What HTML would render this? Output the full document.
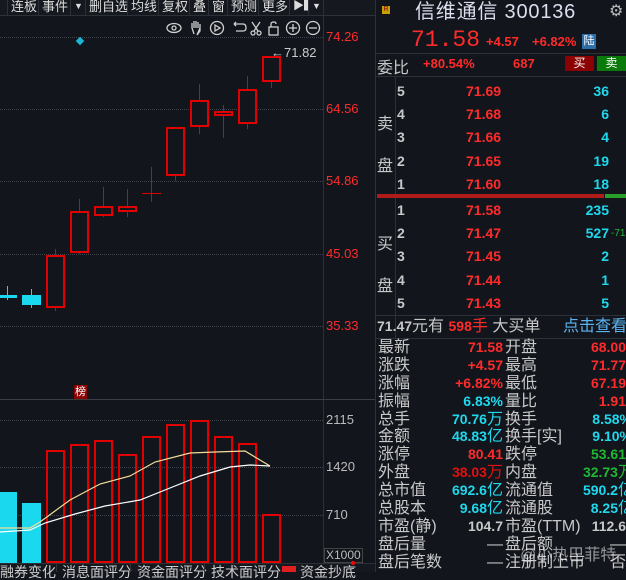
<!DOCTYPE html>
<html><head><meta charset="utf-8">
<style>
*{margin:0;padding:0;box-sizing:border-box}
body{width:626px;height:572px;background:#12161c;overflow:hidden;position:relative;font-family:"Liberation Sans","Noto Sans CJK SC",sans-serif;color:#c8c8c8}
.a{position:absolute;white-space:nowrap}
.r{color:#ff2b2b}.c{color:#1fd8ee}.g{color:#1fb832}.w{color:#c8c8c8}
.bx{position:absolute;border:2px solid #e00000}
.wk{position:absolute;width:1px;background:#e00000}
.cy{position:absolute;background:#1ad8ee}
.cw{position:absolute;width:1px;background:#1ad8ee}
.gl{position:absolute;left:0;width:323px;border-top:1px dotted #3e444c}
.tb{position:absolute;top:0;height:15px;font-size:13px;line-height:13px;color:#ddd;border-right:1px solid #2c3138;padding:0 0 0 3px;white-space:nowrap;overflow:hidden}
.st b{font-size:14px}
</style></head><body>
<!-- toolbar -->
<div class="a" style="left:0;top:0;width:376px;height:16px;background:#15191f;border-bottom:1px solid #2c3138"></div>
<div class="tb" style="left:0;width:8px"></div>
<div class="tb" style="left:8px;width:31px">连板</div>
<div class="tb" style="left:39px;width:32px">事件</div>
<div class="tb" style="left:71px;width:15px;font-size:9px">▼</div>
<div class="tb" style="left:86px;width:42px">删自选</div>
<div class="tb" style="left:128px;width:31px">均线</div>
<div class="tb" style="left:159px;width:31px">复权</div>
<div class="tb" style="left:190px;width:19px">叠</div>
<div class="tb" style="left:209px;width:19px">窗</div>
<div class="tb" style="left:228px;width:31px">预测</div>
<div class="tb" style="left:259px;width:31px">更多</div>
<div class="tb" style="left:290px;width:19px;font-size:11px">▶▍</div>
<div class="tb" style="left:309px;width:15px;font-size:9px">▼</div>
<!-- icon row -->
<svg class="a" style="left:164px;top:19px" width="160" height="18" fill="none" stroke="#d0d0d0" stroke-width="1.3">
<ellipse cx="10" cy="9" rx="7" ry="4.5"/><circle cx="10" cy="9" r="2"/>
<path d="M30 15 L28 9 L28 4 M30 9 V2 M32 9 V2 M34 9 V3 M36 9 V5 L36 12 L33 16 Z"/>
<circle cx="53" cy="9" r="6.5"/><path d="M51 6 L56 9 L51 12 Z"/>
<path d="M70 5 H79 Q82 5 82 9 Q82 12 79 12 H72 M70 5 L72 3 M70 5 L72 7"/>
<circle cx="89" cy="14" r="2"/><circle cx="95" cy="14" r="2"/><path d="M90 12 L96 3 M94 12 L88 3"/>
<rect x="105" y="8" width="9" height="8"/><path d="M107 8 V5 Q107 3 110 3 Q112 3 112 5"/>
<circle cx="129" cy="9" r="6.5"/><path d="M125 9 H133 M129 5 V13"/>
<circle cx="149" cy="9" r="6.5"/><path d="M145 9 H153"/>
</svg>
<!-- grid -->
<div class="gl" style="top:37px"></div><div class="gl" style="top:109px"></div><div class="gl" style="top:181px"></div><div class="gl" style="top:254px"></div><div class="gl" style="top:326px"></div>
<div class="gl" style="top:420px"></div><div class="gl" style="top:467px"></div><div class="gl" style="top:515px"></div>
<div class="a" style="left:323px;top:16px;width:1px;height:548px;background:#2c3138"></div>
<div class="a" style="left:0;top:399px;width:376px;height:1px;background:#3a3f46"></div>
<div class="a r" style="left:326px;top:29px;font-size:13px">74.26</div>
<div class="a r" style="left:326px;top:101px;font-size:13px">64.56</div>
<div class="a r" style="left:326px;top:173px;font-size:13px">54.86</div>
<div class="a r" style="left:326px;top:246px;font-size:13px">45.03</div>
<div class="a r" style="left:326px;top:318px;font-size:13px">35.33</div>
<div class="a" style="left:326px;top:412px;font-size:13px;color:#bbb">2115</div>
<div class="a" style="left:326px;top:459px;font-size:13px;color:#bbb">1420</div>
<div class="a" style="left:326px;top:507px;font-size:13px;color:#bbb">710</div>
<div class="a" style="left:324px;top:548px;font-size:12px;color:#bbb;border:1px solid #444;padding:0 1px;line-height:13px">X1000</div>
<div class="a" style="left:77px;top:38px;width:6px;height:6px;background:#1ab8d8;transform:rotate(45deg)"></div>
<div class="a" style="left:271px;top:45px;font-size:13px;color:#ccc">←71.82</div>
<div class="a" style="left:74px;top:385px;width:13px;height:14px;background:#8b0000;color:#fff;font-size:11px;line-height:14px;text-align:center">榜</div>
<!-- candles -->
<div class="cw" style="left:7px;top:286px;height:14px"></div><div class="cy" style="left:0;top:295px;width:17px;height:3px"></div>
<div class="cw" style="left:31px;top:289px;height:19px"></div><div class="cy" style="left:22px;top:295px;width:19px;height:10px"></div>
<div class="wk" style="left:55px;top:249px;height:62px"></div><div class="bx" style="left:46px;top:255px;width:19px;height:53px;background:#12161c"></div>
<div class="wk" style="left:79px;top:199px;height:55px"></div><div class="bx" style="left:70px;top:211px;width:19px;height:42px;background:#12161c"></div>
<div class="wk" style="left:103px;top:187px;height:30px"></div><div class="bx" style="left:94px;top:206px;width:19px;height:10px;background:#12161c"></div>
<div class="wk" style="left:127px;top:189px;height:28px"></div><div class="bx" style="left:118px;top:206px;width:19px;height:6px;background:#12161c"></div>
<div class="wk" style="left:151px;top:167px;height:35px"></div><div class="a" style="left:142px;top:193px;width:19px;height:1px;background:#e00000"></div>
<div class="wk" style="left:175px;top:170px;height:11px"></div><div class="bx" style="left:166px;top:127px;width:19px;height:49px;background:#12161c"></div>
<div class="wk" style="left:199px;top:84px;height:50px"></div><div class="bx" style="left:190px;top:100px;width:19px;height:27px;background:#12161c"></div>
<div class="wk" style="left:223px;top:105px;height:33px"></div><div class="bx" style="left:214px;top:111px;width:19px;height:5px;background:#12161c"></div>
<div class="wk" style="left:247px;top:76px;height:53px"></div><div class="bx" style="left:238px;top:89px;width:19px;height:35px;background:#12161c"></div>
<div class="wk" style="left:271px;top:75px;height:13px"></div><div class="bx" style="left:262px;top:56px;width:19px;height:26px;background:#12161c"></div>
<!-- volume -->
<div class="cy" style="left:0;top:492px;width:17px;height:71px"></div>
<div class="cy" style="left:22px;top:503px;width:19px;height:60px"></div>
<div class="bx" style="left:46px;top:450px;width:19px;height:113px"></div>
<div class="bx" style="left:70px;top:444px;width:19px;height:119px"></div>
<div class="bx" style="left:94px;top:440px;width:19px;height:123px"></div>
<div class="bx" style="left:118px;top:454px;width:19px;height:109px"></div>
<div class="bx" style="left:142px;top:436px;width:19px;height:127px"></div>
<div class="bx" style="left:166px;top:424px;width:19px;height:139px"></div>
<div class="bx" style="left:190px;top:420px;width:19px;height:143px"></div>
<div class="bx" style="left:214px;top:436px;width:19px;height:127px"></div>
<div class="bx" style="left:238px;top:443px;width:19px;height:120px"></div>
<div class="bx" style="left:262px;top:514px;width:19px;height:49px"></div>
<svg class="a" style="left:0;top:400px" width="323" height="163" fill="none" stroke-width="1.2">
<polyline stroke="#f5dc9a" points="0,128 30,128 40,122 70,100 100,84 130,76 155,62 190,53 215,52 245,51 270,66"/>
<polyline stroke="#ffffff" points="0,132 30,130 45,123 75,114 105,106 140,100 165,90 200,76 230,67 250,65 270,66"/>
</svg>
<!-- bottom tabs -->
<div class="a" style="left:0;top:563px;width:376px;height:9px;background:#15191f;border-top:1px solid #2c3138"></div>
<div class="a" style="left:0;top:564px;font-size:14px;color:#ccc;line-height:16px">融券变化</div>
<div class="a" style="left:56px;top:564px;width:1px;height:8px;background:#333"></div>
<div class="a" style="left:62px;top:564px;font-size:14px;color:#ccc;line-height:16px">消息面评分</div>
<div class="a" style="left:130px;top:564px;width:1px;height:8px;background:#333"></div>
<div class="a" style="left:137px;top:564px;font-size:14px;color:#ccc;line-height:16px">资金面评分</div>
<div class="a" style="left:204px;top:564px;width:1px;height:8px;background:#333"></div>
<div class="a" style="left:211px;top:564px;font-size:14px;color:#ccc;line-height:16px">技术面评分</div>
<div class="a" style="left:282px;top:566px;width:14px;height:6px;background:#e02020"></div>
<div class="a" style="left:300px;top:564px;font-size:14px;color:#ccc;line-height:16px">资金抄底</div>
<div class="a" style="left:351px;top:561px;width:4px;height:4px;border-radius:2px;background:#f00"></div>
<!-- right panel -->
<div class="a" style="left:375px;top:0;width:1px;height:572px;background:#2c3138"></div>
<div class="a" style="left:382px;top:6px;width:8px;height:8px;background:#c8a000;font-size:7px;color:#800;line-height:8px;text-align:center">R</div>
<div class="a" style="left:415px;top:0;font-size:20px;line-height:24px;color:#dde;letter-spacing:0.8px">信维通信 300136</div>
<div class="a" style="left:609px;top:1px;font-size:16px;color:#bbb">⚙</div>
<div class="a r" style="left:411px;top:27px;font-size:23px;line-height:26px;font-family:'Liberation Mono',monospace">71.58</div>
<div class="a r" style="left:486px;top:34px;font-size:13px;font-weight:bold">+4.57</div>
<div class="a r" style="left:532px;top:34px;font-size:13px;font-weight:bold">+6.82%</div>
<div class="a" style="left:582px;top:34px;width:14px;height:15px;background:#2e6ea8;color:#fff;font-size:11px;line-height:15px;text-align:center">陆</div>
<div class="a" style="left:376px;top:53px;width:250px;height:1px;background:#2c3138"></div>
<div class="a w" style="left:377px;top:54px;font-size:16px">委比</div>
<div class="a r" style="left:423px;top:56px;font-size:13px;font-weight:bold">+80.54%</div>
<div class="a r" style="left:513px;top:56px;font-size:13px;font-weight:bold">687</div>
<div class="a" style="left:565px;top:56px;width:29px;height:15px;background:#8b0000;color:#fff;font-size:12px;line-height:15px;text-align:center">买</div>
<div class="a" style="left:597px;top:56px;width:29px;height:15px;background:#0a7a0a;color:#fff;font-size:12px;line-height:15px;text-align:center">卖</div>
<div class="a" style="left:376px;top:76px;width:250px;height:1px;background:#2c3138"></div>
<div class="a" style="left:395px;top:77px;width:1px;height:261px;background:#2c3138"></div>
<div class="a w" style="left:377px;top:104px;font-size:16px;line-height:42px;width:17px;white-space:normal">卖 盘</div>
<div class="a w" style="left:377px;top:224px;font-size:16px;line-height:42px;width:17px;white-space:normal">买 盘</div>
<div style="position:absolute;left:397px;top:80px;width:229px;font-size:14px;font-weight:bold;line-height:23.2px">
<div style="position:relative;height:23.2px"><span class="a w" style="left:0">5</span><span class="a r" style="left:69px">71.69</span><span class="a c" style="right:17px">36</span></div>
<div style="position:relative;height:23.2px"><span class="a w" style="left:0">4</span><span class="a r" style="left:69px">71.68</span><span class="a c" style="right:17px">6</span></div>
<div style="position:relative;height:23.2px"><span class="a w" style="left:0">3</span><span class="a r" style="left:69px">71.66</span><span class="a c" style="right:17px">4</span></div>
<div style="position:relative;height:23.2px"><span class="a w" style="left:0">2</span><span class="a r" style="left:69px">71.65</span><span class="a c" style="right:17px">19</span></div>
<div style="position:relative;height:23.2px"><span class="a w" style="left:0">1</span><span class="a r" style="left:69px">71.60</span><span class="a c" style="right:17px">18</span></div>
</div>
<div class="a" style="left:377px;top:194px;width:227px;height:4px;background:#b01c1c"></div>
<div class="a" style="left:605px;top:194px;width:21px;height:4px;background:#2aa02a"></div>
<div style="position:absolute;left:397px;top:199px;width:229px;font-size:14px;font-weight:bold;line-height:23.2px">
<div style="position:relative;height:23.2px"><span class="a w" style="left:0">1</span><span class="a r" style="left:69px">71.58</span><span class="a c" style="right:17px">235</span></div>
<div style="position:relative;height:23.2px"><span class="a w" style="left:0">2</span><span class="a r" style="left:69px">71.47</span><span class="a c" style="right:17px">527</span><span class="a g" style="left:214px;font-size:10px;font-weight:normal">-71</span></div>
<div style="position:relative;height:23.2px"><span class="a w" style="left:0">3</span><span class="a r" style="left:69px">71.45</span><span class="a c" style="right:17px">2</span></div>
<div style="position:relative;height:23.2px"><span class="a w" style="left:0">4</span><span class="a r" style="left:69px">71.44</span><span class="a c" style="right:17px">1</span></div>
<div style="position:relative;height:23.2px"><span class="a w" style="left:0">5</span><span class="a r" style="left:69px">71.43</span><span class="a c" style="right:17px">5</span></div>
</div>
<div class="a" style="left:376px;top:315px;width:250px;height:1px;background:#2c3138"></div>
<div class="a" style="left:377px;top:316px;font-size:16px;line-height:21px"><b class="w" style="font-size:14px">71.47</b><span class="w">元有 </span><b class="r" style="font-size:14px">598</b><span class="r">手</span><span class="w"> 大买单</span></div>
<div class="a" style="left:563px;top:316px;font-size:16px;line-height:21px;color:#5ab4f0">点击查看</div>
<div class="a" style="left:376px;top:338px;width:250px;height:1px;background:#2c3138"></div>
<div class="st" style="position:absolute;left:378px;top:339px;width:262px;font-size:16px;line-height:17.9px">
<div style="position:relative;height:17.9px"><span class="a w" style="left:0">最新</span><b class="a r" style="right:137px">71.58</b><span class="a w" style="left:127px">开盘</span><b class="a r" style="right:14px">68.00</b></div>
<div style="position:relative;height:17.9px"><span class="a w" style="left:0">涨跌</span><b class="a r" style="right:137px">+4.57</b><span class="a w" style="left:127px">最高</span><b class="a r" style="right:14px">71.77</b></div>
<div style="position:relative;height:17.9px"><span class="a w" style="left:0">涨幅</span><b class="a r" style="right:137px">+6.82%</b><span class="a w" style="left:127px">最低</span><b class="a r" style="right:14px">67.19</b></div>
<div style="position:relative;height:17.9px"><span class="a w" style="left:0">振幅</span><b class="a c" style="right:137px">6.83%</b><span class="a w" style="left:127px">量比</span><b class="a r" style="right:14px">1.91</b></div>
<div style="position:relative;height:17.9px"><span class="a w" style="left:0">总手</span><span class="a c" style="right:137px"><b>70.76</b>万</span><span class="a w" style="left:127px">换手</span><b class="a c" style="right:8px">8.58%</b></div>
<div style="position:relative;height:17.9px"><span class="a w" style="left:0">金额</span><span class="a c" style="right:137px"><b>48.83</b>亿</span><span class="a w" style="left:127px">换手[实]</span><b class="a c" style="right:8px">9.10%</b></div>
<div style="position:relative;height:17.9px"><span class="a w" style="left:0">涨停</span><b class="a r" style="right:137px">80.41</b><span class="a w" style="left:127px">跌停</span><b class="a g" style="right:14px">53.61</b></div>
<div style="position:relative;height:17.9px"><span class="a w" style="left:0">外盘</span><span class="a" style="right:137px;color:#e01010"><b>38.03</b>万</span><span class="a w" style="left:127px">内盘</span><span class="a g" style="right:6px"><b>32.73</b>万</span></div>
<div style="position:relative;height:17.9px"><span class="a w" style="left:0">总市值</span><span class="a c" style="right:137px"><b>692.6</b>亿</span><span class="a w" style="left:127px">流通值</span><span class="a c" style="right:6px"><b>590.2</b>亿</span></div>
<div style="position:relative;height:17.9px"><span class="a w" style="left:0">总股本</span><span class="a c" style="right:137px"><b>9.68</b>亿</span><span class="a w" style="left:127px">流通股</span><span class="a c" style="right:6px"><b>8.25</b>亿</span></div>
<div style="position:relative;height:17.9px"><span class="a w" style="left:0">市盈(静)</span><b class="a w" style="right:137px">104.7</b><span class="a w" style="left:127px">市盈(TTM)</span><b class="a w" style="right:14px">112.6</b></div>
<div style="position:relative;height:17.9px"><span class="a w" style="left:0">盘后量</span><span class="a w" style="right:137px">—</span><span class="a w" style="left:127px">盘后额</span><span class="a w" style="right:14px">—</span></div>
<div style="position:relative;height:17.9px"><span class="a w" style="left:0">盘后笔数</span><span class="a w" style="right:137px">—</span><span class="a w" style="left:127px">注册制上市</span><span class="a w" style="right:14px">否</span></div>
</div>
<div class="a" style="left:520px;top:541px;font-size:16px;color:rgba(255,255,255,0.55)">@小热巴菲特</div>
</body></html>
